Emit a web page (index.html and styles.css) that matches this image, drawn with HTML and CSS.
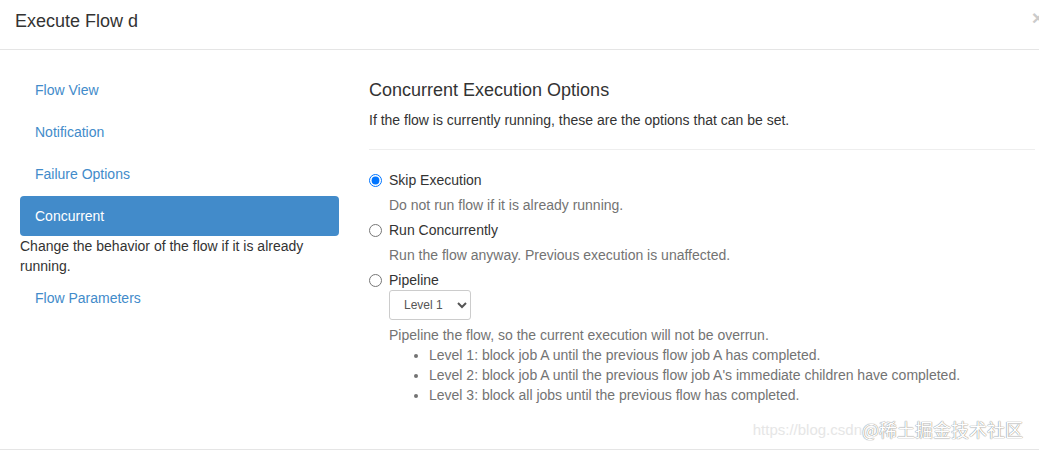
FILE: index.html
```html
<!DOCTYPE html>
<html>
<head>
<meta charset="utf-8">
<link rel="stylesheet" href="styles.css">
</head>
<body>
<div class="modal">
  <div class="modal-header">
    <h4 class="modal-title">Execute Flow d</h4>
    <button class="close" type="button">×</button>
  </div>
  <div class="modal-body">
    <ul class="nav-pills">
      <li><a href="#">Flow View</a></li>
      <li><a href="#">Notification</a></li>
      <li><a href="#">Failure Options</a></li>
      <li class="active"><a href="#">Concurrent</a>
        <div class="menu-hint">Change the behavior of the flow if it is already running.</div>
      </li>
      <li><a href="#">Flow Parameters</a></li>
    </ul>
    <div class="panel">
      <h4 class="section-title">Concurrent Execution Options</h4>
      <p class="lead-text">If the flow is currently running, these are the options that can be set.</p>
      <hr class="divider">
      <div class="radio"><label><input type="radio" name="conc" checked><span>Skip Execution</span></label></div>
      <div class="help">Do not run flow if it is already running.</div>
      <div class="radio"><label><input type="radio" name="conc"><span>Run Concurrently</span></label></div>
      <div class="help">Run the flow anyway. Previous execution is unaffected.</div>
      <div class="radio"><label><input type="radio" name="conc"><span>Pipeline</span></label></div>
      <div class="indent">
        <select class="level-select">
          <option>Level 1</option>
          <option>Level 2</option>
          <option>Level 3</option>
        </select>
      </div>
      <div class="help">Pipeline the flow, so the current execution will not be overrun.
        <ul class="levels">
          <li>Level 1: block job A until the previous flow job A has completed.</li>
          <li>Level 2: block job A until the previous flow job A's immediate children have completed.</li>
          <li>Level 3: block all jobs until the previous flow has completed.</li>
        </ul>
      </div>
    </div>
    <div class="watermark">
      <span class="wm-url">https://blog.csdn</span>
      <span class="wm-brand">@稀土掘金技术社区</span>
    </div>
  </div>
</div>
</body>
</html>
```
FILE: styles.css
```css
html, body {
  margin: 0;
  padding: 0;
  background: #fff;
  overflow: hidden;
}
body {
  font-family: "Liberation Sans", Arial, sans-serif;
  font-size: 14px;
  line-height: 20px;
  color: #333;
  width: 1039px;
  height: 454px;
}
.modal {
  width: 1039px;
  overflow: hidden;
}
.modal-header {
  height: 50px;
  box-sizing: border-box;
  padding: 8px 15px 0 15px;
  border-bottom: 1px solid #e5e5e5;
  display: flex;
  justify-content: space-between;
  align-items: flex-start;
}
.modal-title {
  margin: 0;
  font-size: 18px;
  font-weight: normal;
  line-height: 26px;
  color: #333;
}
.close {
  border: 0;
  background: transparent;
  padding: 0;
  margin: 0 -20px 0 0;
  font-family: "Liberation Sans", Arial, sans-serif;
  font-size: 21px;
  font-weight: bold;
  line-height: 20px;
  color: #000;
  opacity: 0.2;
}
.modal-body {
  position: relative;
  height: 400px;
  box-sizing: border-box;
  border-bottom: 1px solid #e5e5e5;
  padding: 20px 4px 0 20px;
  display: grid;
  grid-template-columns: 319px 1fr;
  column-gap: 30px;
  align-items: start;
}
.nav-pills {
  list-style: none;
  margin: 0;
  padding: 0;
}
.nav-pills li + li {
  margin-top: 2px;
}
.nav-pills a {
  display: block;
  padding: 10px 15px;
  line-height: 20px;
  border-radius: 4px;
  color: #428bca;
  text-decoration: none;
}
.nav-pills .active a {
  background: #428bca;
  color: #fff;
}
.menu-hint {
  color: #333;
  line-height: 20px;
}
.panel {
  padding-top: 10px;
}
.section-title {
  margin: 0 0 10px 0;
  font-size: 18px;
  font-weight: normal;
  line-height: 20px;
  color: #333;
}
.lead-text {
  margin: 0;
  line-height: 20px;
}
.divider {
  border: 0;
  border-top: 1px solid #eee;
  margin: 19px 0 20px 0;
  height: 0;
}
.radio {
  line-height: 20px;
}
.radio label {
  display: flex;
  align-items: center;
  gap: 7px;
}
.radio input {
  margin: 0;
  width: 13px;
  height: 13px;
}
.help {
  color: #737373;
  padding-left: 20px;
  margin: 5px 0;
}
.indent {
  padding-left: 20px;
}
.level-select {
  height: 30px;
  width: 82px;
  padding: 0 8px 0 10px;
  font-family: "Liberation Sans", Arial, sans-serif;
  font-size: 12px;
  color: #555;
  border: 1px solid #ccc;
  border-radius: 3px;
  background: #fff;
}
.levels {
  margin: 0;
  padding-left: 40px;
}
.watermark {
  position: absolute;
  right: 16px;
  bottom: 8px;
  display: flex;
  align-items: flex-end;
  white-space: nowrap;
}
.wm-url {
  color: #e6e6e6;
  font-size: 15px;
  padding-bottom: 1px;
}
.wm-brand {
  color: #fff;
  font-family: "Noto Sans CJK SC", sans-serif;
  font-size: 18px;
  line-height: 24px;
  text-shadow: 0 0 1px #888, 0 0 1px #888;
}
```
